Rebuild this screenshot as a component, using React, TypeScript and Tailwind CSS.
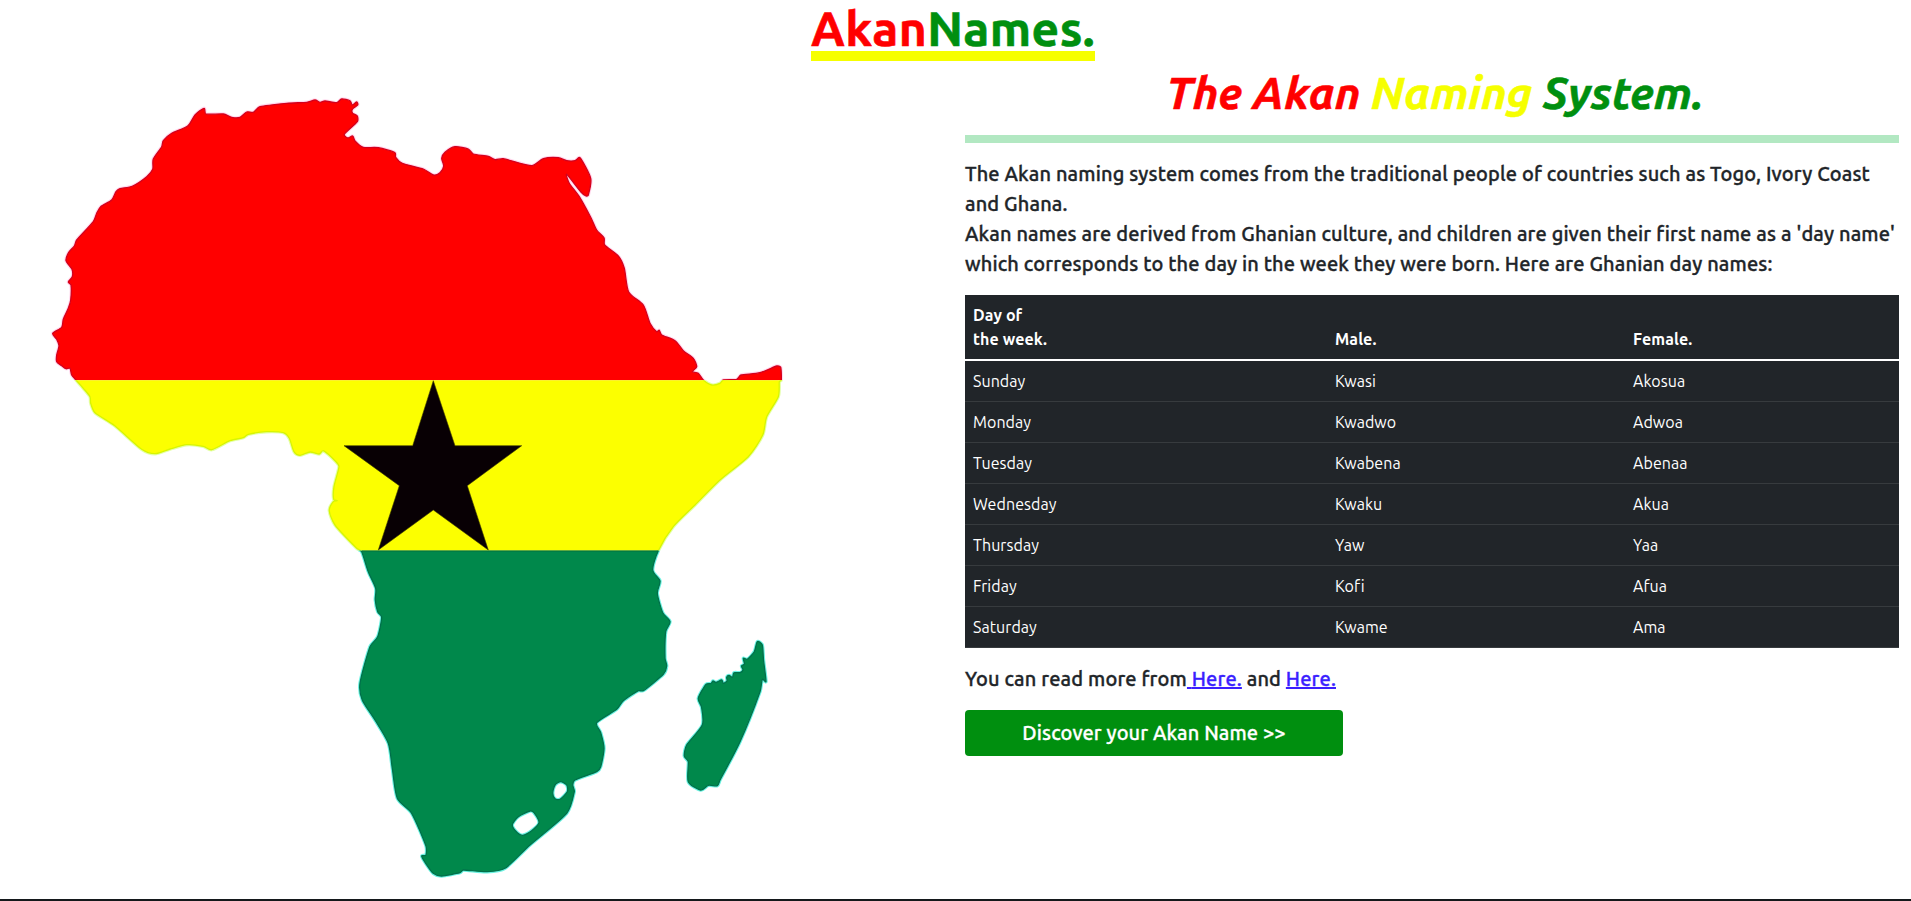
const africa =
  '76,380 71.7,375 70,368.3 66,368.7 61.7,365.7 56.7,361.7 56.7,355 59,345.7 56.7,339.3 52.7,333.3 61.7,327.3 63.3,319.3 68.3,308.3 70.7,300 71,285 68.3,282 72.3,276.7 72,269.3 66,260.7 68.7,252.3 74.3,246 76.7,240 93.3,221.7 96.7,213.3 100.7,206.7 111.7,200 116,191.7 120,188.7 132.7,186 146.7,176.7 152.7,169.3 153.3,159 161.7,146.7 163.3,140.7 171.7,133.3 187.7,126 195,115 204,108.3 206,114 223.3,114 231.7,117.3 240,117.3 246.7,112 253.3,112.3 260,106.7 286.7,103.3 306.7,102.3 315,100 320,102.3 325,101 336.7,102.7 341.7,99 350,100.7 352.3,105 356.7,102 357.7,105 352.3,109.3 352.7,113.3 357.3,116 357.3,121.7 344.3,134.3 347.7,138 352.7,136 355,141 363.3,147.3 378.3,147.7 395,152.7 395.7,157.3 402.3,163.3 423.3,169 433.3,175 440,172.7 443.7,166 441.7,158.3 445,152.3 455,146.7 468.3,149 473.3,154 488.3,156.3 495,159.7 503.3,158.7 531.7,165.7 543.3,158.7 558.3,157.7 566.7,160.7 575,160.7 580,157.7 590.7,178.3 588.3,195 586,196 580.7,191.7 566.7,174.3 569.3,183.3 579.3,196.7 590.7,217.3 596.7,230 604,237.7 604.7,245 618.3,256 624.3,268.3 628.7,292 643.3,305 650,323.3 656.7,331.7 659.3,330.3 661.7,335 675,340.7 683.3,350.7 693.3,358.3 696.7,366.7 692.3,371.7 698.3,373.3 703.3,380 711.7,385 720,383.3 723.3,380 736.7,379.3 741,375 760,372.7 776.7,366 780.7,367.3 781.3,380 779.3,381.7 778.3,396.7 766.7,416.7 762.7,435 748.3,456.7 720,480 695,505 673.3,526.7 658.3,550.7 652.7,570 660,581 657.3,593.3 662.7,612.7 670,621.7 665.7,631.7 665,658.3 666.7,666 663.3,674.3 643.3,690.7 638.3,690.7 623.3,700.7 616.7,709.3 596.7,722.7 600.7,732.7 604,748.3 600.7,766.7 596.7,771.7 575,780 572.7,785 574.3,791.7 566.7,813.3 530,845 505,868.3 486.7,871.7 463.3,870 460,872.7 441.7,876 433.3,873.3 425.7,863.3 421.7,856 426,855 426,846 411.7,813.3 397.3,798.3 392.3,768.3 388.3,743.3 375,720 362.3,700 360,683.3 370,646.7 377.7,636.7 381.7,617.3 377.7,611.7 375.3,600 375.7,588.3 368.3,571.7 361.7,551.7 356.7,548.3 335,525 329.3,510.7 333.3,501.7 337.3,500.7 333.7,499.3 334,486.7 339,466.7 336,461.7 323.3,450.7 319.3,454 310,452 300,455.3 294,451.7 289.3,438.3 283.3,432.7 266.7,431.7 248.3,434.3 243.3,437.7 230,440.7 211.7,449.7 203.3,446.3 186.7,444.7 170,449 155,453.7 141.7,449.3 115,426 95,412.7 90.7,403.3 90,396.7 83.3,388.3';

const eswatini = '552.7,793 555,785 560.7,781.7 566.7,785 567.3,791.7 560,799.3 555,798.7';

const lesotho = '512.3,825 518.3,816.7 530,811 534,812.7 539,822.7 531.7,830.7 522.7,835.3 517.3,832.7';

const madagascar =
  '757.3,641.7 762.3,645 763.5,660 766,681.7 762.3,679.3 760,691.7 740,741.7 720,780 717.3,785.7 708.3,785.3 700.7,790 688.3,781.7 688.3,761.7 684.3,756 686.7,745 702.3,725 701.5,707 698.3,698.3 706,684.3 711,683.5 713,681 716,682.5 721.7,680 723.3,683.3 727,681 726.7,677.3 729,675.5 732.5,677.3 734,672.7 740,672.7 743,670 741.5,666 744.5,664 743.3,658.3 747.3,659.3 754.3,651.7';

/** Joins the points with a closed, lightly rounded curve that passes through each of them. */
function coast(list: string): string {
  const p = list.split(' ').map((s) => s.split(',').map(Number));
  const n = p.length;
  const k = 0.13;
  let d = `M${p[0][0]},${p[0][1]}`;
  for (let i = 0; i < n; i++) {
    const a = p[(i - 1 + n) % n];
    const b = p[i];
    const c = p[(i + 1) % n];
    const e = p[(i + 2) % n];
    const len = Math.hypot(c[0] - b[0], c[1] - b[1]);
    const before = Math.hypot(c[0] - a[0], c[1] - a[1]) || 1;
    const after = Math.hypot(e[0] - b[0], e[1] - b[1]) || 1;
    const s = Math.min(k, (len * 0.3) / before);
    const t = Math.min(k, (len * 0.3) / after);
    d += `C${b[0] + (c[0] - a[0]) * s},${b[1] + (c[1] - a[1]) * s} ${c[0] - (e[0] - b[0]) * t},${c[1] - (e[1] - b[1]) * t} ${c[0]},${c[1]}`;
  }
  return d + 'Z';
}

const land = [africa, eswatini, lesotho, madagascar].map(coast).join('');

const star =
  '433.3,380.7 455,445.7 521.7,445.7 467.3,485.7 488.3,550 433.3,510 378.3,550 399.3,485.7 344,445.7 412.7,445.7';

const bands = [
  { id: 'north', y: 62, height: 318.3, fill: '#ff0000', edge: '#d4001c', halo: '#ffd9ee' },
  { id: 'middle', y: 380.3, height: 170.4, fill: '#fcff00', edge: '#d8f500', halo: '#e4ffa8' },
  { id: 'south', y: 550.7, height: 348.3, fill: '#00884b', edge: '#00704a', halo: '#6df2e2' },
];

function FlagMap() {
  return (
    <svg
      className="block h-[837px] w-[955px]"
      viewBox="0 62 955 837"
      role="img"
      aria-label="Africa in the colours of the Ghanaian flag"
    >
      {bands.map((b) => (
        <g key={b.id}>
          <clipPath id={b.id}>
            <rect x="0" y={b.y} width="955" height={b.height} />
          </clipPath>
          <g clipPath={`url(#${b.id})`} fillRule="evenodd" strokeLinejoin="round">
            <path d={land} fill="none" stroke={b.halo} strokeWidth="3.4" />
            <path d={land} fill={b.fill} />
            <path d={land} fill="none" stroke={b.edge} strokeWidth="1.3" />
          </g>
        </g>
      ))}
      <path d="M362 551H658" stroke="#00703f" strokeWidth="1" />
      <polygon points={star} fill="#080004" stroke="#3c3a00" strokeWidth="0.6" />
    </svg>
  );
}

const days = [
  ['Sunday', 'Kwasi', 'Akosua'],
  ['Monday', 'Kwadwo', 'Adwoa'],
  ['Tuesday', 'Kwabena', 'Abenaa'],
  ['Wednesday', 'Kwaku', 'Akua'],
  ['Thursday', 'Yaw', 'Yaa'],
  ['Friday', 'Kofi', 'Afua'],
  ['Saturday', 'Kwame', 'Ama'],
];

export default function App() {
  return (
    <div className="flex h-[901px] flex-col overflow-hidden bg-white font-[Ubuntu,'Noto_Sans',sans-serif] text-[#212529]">
      <header className="flex h-[62px] justify-center pr-[5px]">
        <h1 className="h-[61px] border-b-[10px] border-[#f6ff00] text-[48px] leading-[57.6px] font-bold tracking-[0.4px] text-[#008f0f] [-webkit-text-stroke:0.6px]">
          <span className="text-[#ff0000]">Akan</span>Names.
        </h1>
      </header>

      <main className="grid h-[837px] grid-cols-[955px_1fr]">
        <FlagMap />
        <section className="pr-3 pl-[10px]">
          <h2 className="h-[73px] pt-[3px] pl-[6px] text-center text-[44.8px] leading-[54px] font-bold text-[#008f0f] italic [-webkit-text-stroke:0.6px]">
            <span className="text-[#ff0000]">The Akan</span>{' '}
            <span className="text-[#f6ff00]">Naming</span> System.
          </h2>
          <hr className="h-2 border-0 bg-[#b2e8c2]" />

          <p className="mt-4 text-[20px] leading-[30px] font-medium tracking-[0.14px] [-webkit-text-stroke:0.35px]">
            The Akan naming system comes from the traditional people of countries such as Togo, Ivory Coast
            <br />
            and Ghana.
            <br />
            Akan names are derived from Ghanian culture, and children are given their first name as a 'day name'
            <br />
            which corresponds to the day in the week they were born. Here are Ghanian day names:
          </p>

          <table className="mt-4 w-full table-fixed border-collapse bg-[#212529] text-left text-base leading-6 text-white">
            <colgroup>
              <col className="w-[362px]" />
              <col className="w-[298px]" />
              <col />
            </colgroup>
            <thead>
              <tr className="h-[65px] border-b-2 border-white align-bottom font-bold tracking-[0.1px]">
                <th className="px-2 pt-2 pb-2">
                  Day of
                  <br />
                  the week.
                </th>
                <th className="p-2">Male.</th>
                <th className="p-2">Female.</th>
              </tr>
            </thead>
            <tbody className="tracking-[0.06px]">
              {days.map(([day, male, female]) => (
                <tr key={day} className="h-[41px] border-b border-[#373b3e]">
                  <td className="px-2">{day}</td>
                  <td className="px-2">{male}</td>
                  <td className="px-2">{female}</td>
                </tr>
              ))}
            </tbody>
          </table>

          <p className="mt-4 text-[20px] leading-[30px] font-medium tracking-[0.15px] [-webkit-text-stroke:0.35px]">
            You can read more from
            <a href="#" className="text-[#3b1fff] underline">
              {' '}Here.
            </a>{' '}
            and{' '}
            <a href="#" className="text-[#3b1fff] underline">
              Here.
            </a>
          </p>

          <button className="mt-4 block h-[46px] w-[378px] rounded-[4px] bg-[#008f0f] text-[20px] leading-[30px] font-medium tracking-[0.1px] text-white [-webkit-text-stroke:0.3px]">
            Discover your Akan Name &gt;&gt;
          </button>
        </section>
      </main>
      <footer className="h-[2px] bg-[#14181b]" />
    </div>
  );
}
